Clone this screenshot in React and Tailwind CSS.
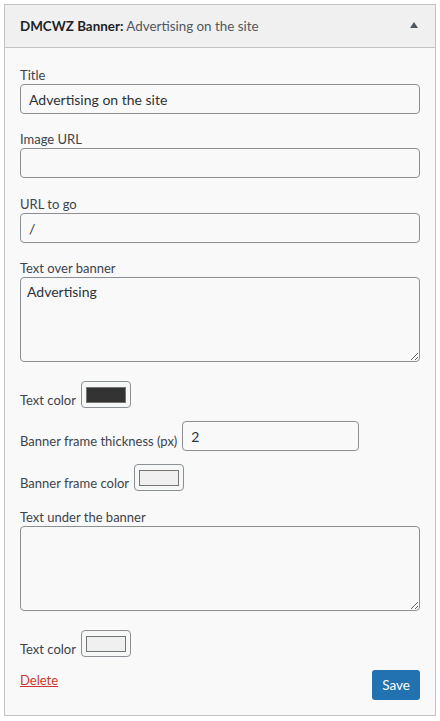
import React from 'react';

const font = { fontFamily: 'Lato, "Noto Sans", sans-serif' };

const Swatch = ({ color }) => (
  <button className="h-[27px] w-[50px] rounded-[4px] border border-[#8c8f94] bg-[#f6f7f7] flex items-center justify-center">
    <span className={`block h-[16px] w-[40px] border border-[#757575] ${color}`} />
  </button>
);

const Field = ({ label, value = '', className = '' }) => (
  <div className={className}>
    <label className="block pt-[1px] text-[13px] leading-[18px] text-[#3c434a]">{label}</label>
    <input
      defaultValue={value}
      className="block h-[30px] w-full rounded-[4px] border border-[#8c8f94] bg-[#f9f9f9] px-2 text-[14px] text-[#2c3338] outline-none"
    />
  </div>
);

const Area = ({ label, value = '', className = '' }) => (
  <div className={className}>
    <label className="block pt-[1px] text-[13px] leading-[18px] text-[#3c434a]">{label}</label>
    <textarea
      defaultValue={value}
      className="block h-[85px] w-full rounded-[4px] border border-[#8c8f94] bg-[#f9f9f9] px-[6px] py-[4px] text-[14px] leading-[20px] text-[#2c3338] outline-none"
    />
  </div>
);

export default function App() {
  return (
    <div className="min-h-[721px] bg-white pt-[4px] pl-[4px]" style={font}>
      <div className="w-[432px] border border-[#c3c4c7] bg-[#f9f9f9]">
        {/* Header */}
        <div className="flex h-[43px] items-center justify-between border-b border-[#c3c4c7] bg-[#f0f0f1] pl-[15px] pr-[17px]">
          <h3 className="pt-[1px] text-[13.4px] text-[#1d2327]">
            <span className="font-bold">DMCWZ Banner:</span>
            <span className="text-[#50575e]"> Advertising on the site</span>
          </h3>
          <svg width="8" height="6" viewBox="0 0 8 6" className="mt-[-2px]">
            <path d="M4 0 L8 6 L0 6 Z" fill="#50575e" />
          </svg>
        </div>

        {/* Body */}
        <div className="px-[15px] pt-[17px] pb-[15px]">
          <Field label="Title" value="Advertising on the site" className="mb-[15px]" />
          <Field label="Image URL" className="mb-[16px]" />
          <Field label="URL to go" value="/" className="mb-[15px]" />
          <Area label="Text over banner" value="Advertising" />

          <div className="mt-[19px] flex items-end gap-[5px]">
            <span className="mb-[-1px] text-[13px] leading-[18px] text-[#3c434a]">Text color</span>
            <Swatch color="bg-[#333333]" />
          </div>

          <div className="mt-[13px] flex items-end gap-[5px]">
            <span className="mb-[1px] text-[13px] leading-[18px] text-[#3c434a]">Banner frame thickness (px)</span>
            <input
              defaultValue="2"
              className="block h-[30px] w-[177px] rounded-[4px] border border-[#8c8f94] bg-[#f9f9f9] px-2 text-[14px] text-[#2c3338] outline-none"
            />
          </div>

          <div className="mt-[13px] flex items-end gap-[5px]">
            <span className="mb-[-1px] text-[13px] leading-[18px] text-[#3c434a]">Banner frame color</span>
            <Swatch color="bg-[#f0f0f0]" />
          </div>

          <Area label="Text under the banner" className="mt-[16px]" />

          <div className="mt-[19px] flex items-end gap-[5px]">
            <span className="mb-[-1px] text-[13px] leading-[18px] text-[#3c434a]">Text color</span>
            <Swatch color="bg-[#f0f0f0]" />
          </div>

          <div className="mt-[13px] flex items-start justify-between">
            <a href="#" className="mt-[1px] text-[13px] leading-[18px] text-[#c8382f] underline">Delete</a>
            <button className="h-[30px] rounded-[3px] bg-[#2271b1] px-[10px] text-[13.5px] text-white">Save</button>
          </div>
        </div>
      </div>
    </div>
  );
}
